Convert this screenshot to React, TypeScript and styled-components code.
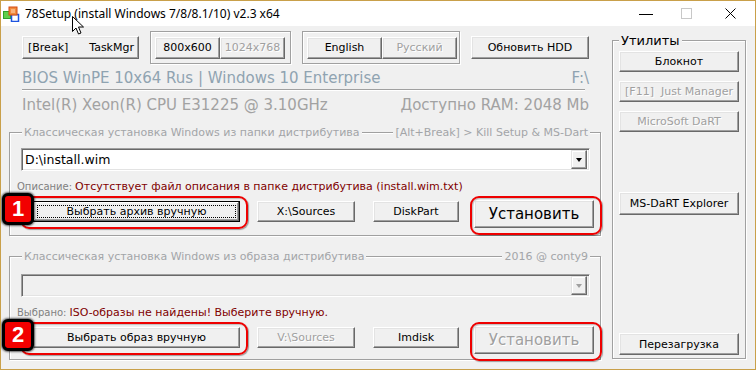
import React from 'react';
import styled, { createGlobalStyle, css } from 'styled-components';

const UI = '"DejaVu Sans", "Noto Sans", sans-serif';

const GlobalStyle = createGlobalStyle`
  html, body { margin: 0; padding: 0; background: #ffffff; }
  body { font-family: ${UI}; }
  * { box-sizing: border-box; }
`;

const Window = styled.div`
  position: relative;
  width: 756px;
  height: 370px;
  border: 1px solid #c9a04a;
  background: #f0f0f0;
  display: flex;
  flex-direction: column;
  overflow: hidden;
`;

const TitleBar = styled.div`
  height: 25px;
  flex-shrink: 0;
  background: #ffffff;
  display: flex;
  align-items: center;
`;

const AppIcon = styled.svg`
  width: 17px;
  height: 16px;
  margin-left: 2px;
  margin-top: 1px;
  flex-shrink: 0;
`;

const TitleText = styled.span`
  margin-left: 5px;
  font-family: "Noto Sans", "Open Sans", sans-serif;
  font-size: 12px;
  color: #000;
  white-space: nowrap;
  flex: 1;
`;

const CaptionButton = styled.div<{ $w: number }>`
  width: ${(p) => p.$w}px;
  height: 25px;
  display: flex;
  align-items: center;
  justify-content: center;
`;

const Cursor = styled.svg`
  position: absolute;
  left: 71px;
  top: 15px;
  width: 13px;
  height: 20px;
`;

const Body = styled.div`
  flex: 1;
  display: flex;
  flex-direction: row;
`;

const LeftColumn = styled.div`
  width: 600px;
  padding-left: 8px;
  display: flex;
  flex-direction: column;
`;

const TopRow = styled.div`
  height: 38px;
  padding: 5px 0 0 13px;
  display: flex;
  align-items: center;
`;

const Button = styled.div<{
  $w: number;
  $h?: number;
  $size?: number;
  $disabled?: boolean;
  $focused?: boolean;
  $mt?: number;
  $ml?: number;
  $spread?: boolean;
}>`
  position: relative;
  width: ${(p) => p.$w}px;
  height: ${(p) => p.$h ?? 21}px;
  margin-top: ${(p) => p.$mt ?? 0}px;
  margin-left: ${(p) => p.$ml ?? 0}px;
  flex-shrink: 0;
  background: #f0f0f0;
  border: 1px solid;
  border-color: #ffffff #696969 #696969 #ffffff;
  box-shadow: inset -1px -1px 0 #a0a0a0, inset 1px 1px 0 #e3e3e3;
  display: flex;
  align-items: center;
  justify-content: ${(p) => (p.$spread ? 'space-between' : 'center')};
  padding: ${(p) => (p.$spread ? '0 4px 0 5px' : '0')};
  font-family: ${UI};
  font-size: ${(p) => p.$size ?? 11}px;
  color: ${(p) => (p.$disabled ? '#a0a0a0' : '#000000')};
  white-space: nowrap;
  ${(p) =>
    p.$disabled &&
    css`
      text-shadow: 1px 1px 0 #ffffff;
    `}
  ${(p) =>
    p.$focused &&
    css`
      border-color: #000000;
      box-shadow: inset -1px -1px 0 #696969, inset 1px 1px 0 #ffffff, inset -2px -2px 0 #a0a0a0;
      &::after {
        content: '';
        position: absolute;
        inset: 3px;
        border: 1px dotted #000000;
      }
    `}
`;

const MiniGroup = styled.div<{ $w: number; $ml: number }>`
  width: ${(p) => p.$w}px;
  height: 33px;
  margin-left: ${(p) => p.$ml}px;
  border: 1px solid #a0a0a0;
  box-shadow: inset 1px 1px 0 #ffffff, 1px 1px 0 #ffffff;
  display: flex;
  align-items: center;
  padding-left: 4px;
  flex-shrink: 0;
`;

const Info = styled.div`
  padding: 0 12px 0 13px;
  display: flex;
  flex-direction: column;
`;

const InfoLine = styled.div<{ $color: string }>`
  height: 25px;
  padding-top: 2px;
  display: flex;
  justify-content: space-between;
  align-items: center;
  font-family: ${UI};
  font-size: 15px;
  color: ${(p) => p.$color};
  white-space: nowrap;
`;

const Separator = styled.div`
  height: 2px;
  margin-right: 4px;
  border-top: 1px solid #a0a0a0;
  border-bottom: 1px solid #ffffff;
`;

const GroupBox = styled.div<{ $mt: number; $h: number }>`
  position: relative;
  margin-top: ${(p) => p.$mt}px;
  height: ${(p) => p.$h}px;
  border: 1px solid #a0a0a0;
  box-shadow: inset 1px 1px 0 #ffffff, 1px 1px 0 #ffffff;
  display: flex;
  flex-direction: column;
`;

const GroupHeader = styled.div<{ $pl: number; $pr: number }>`
  height: 15px;
  margin-top: -8px;
  padding: 0 ${(p) => p.$pr}px 0 ${(p) => p.$pl}px;
  display: flex;
  justify-content: space-between;
  align-items: center;
`;

const GroupTitle = styled.span<{ $dark?: boolean; $size?: number }>`
  background: #f0f0f0;
  padding: 0 2px;
  font-family: ${UI};
  font-size: ${(p) => p.$size ?? 11}px;
  color: ${(p) => (p.$dark ? '#000000' : '#a3a5a8')};
  white-space: nowrap;
  line-height: 15px;
`;

const Combo = styled.div<{ $disabled?: boolean; $mt: number }>`
  height: 23px;
  margin: ${(p) => p.$mt}px 10px 0 11px;
  background: ${(p) => (p.$disabled ? '#f0f0f0' : '#ffffff')};
  border: 1px solid;
  border-color: #a0a0a0 #ffffff #ffffff #a0a0a0;
  box-shadow: inset 1px 1px 0 #696969, inset -1px -1px 0 #e3e3e3;
  display: flex;
  align-items: center;
  padding: 0 2px 0 3px;
`;

const ComboText = styled.span`
  flex: 1;
  font-family: ${UI};
  font-size: 12.5px;
  color: #000;
`;

const ArrowButton = styled.div`
  width: 16px;
  height: 19px;
  background: #f0f0f0;
  border: 1px solid;
  border-color: #e3e3e3 #696969 #696969 #e3e3e3;
  box-shadow: inset -1px -1px 0 #a0a0a0, inset 1px 1px 0 #ffffff;
  display: flex;
  align-items: center;
  justify-content: center;
`;

const Triangle = styled.div<{ $disabled?: boolean }>`
  width: 0;
  height: 0;
  border-left: 3.5px solid transparent;
  border-right: 3.5px solid transparent;
  border-top: 4px solid ${(p) => (p.$disabled ? '#a0a0a0' : '#000000')};
  margin-top: 1px;
`;

const Desc = styled.div`
  height: 16px;
  margin-top: 7px;
  padding-left: 7px;
  display: flex;
  align-items: center;
  white-space: nowrap;
`;

const DescLabel = styled.span`
  font-family: ${UI};
  font-size: 10px;
  color: #808080;
`;

const DescText = styled.span`
  margin-left: 3px;
  font-family: ${UI};
  font-size: 11px;
  color: #800000;
`;

const ButtonRow = styled.div`
  margin-top: 6px;
  padding-left: 23px;
  display: flex;
  align-items: flex-start;
`;

const Annotated = styled.div`
  position: relative;
  flex-shrink: 0;
`;

const Ring = styled.div<{ $l: number; $t: number; $w: number; $h: number }>`
  position: absolute;
  left: ${(p) => p.$l}px;
  top: ${(p) => p.$t}px;
  width: ${(p) => p.$w}px;
  height: ${(p) => p.$h}px;
  border: 2px solid #ee0000;
  border-radius: 9px;
  box-shadow: 1px 1px 1px rgba(0, 0, 0, 0.35), inset 1px 1px 1px rgba(0, 0, 0, 0.2);
  pointer-events: none;
`;

const Badge = styled.div`
  position: absolute;
  left: -31px;
  top: -7px;
  width: 32px;
  height: 32px;
  background: #f20000;
  border: 3px solid #000000;
  border-radius: 6px;
  box-shadow: 0 0 2px 1px rgba(0, 0, 0, 0.6);
  display: flex;
  align-items: center;
  justify-content: center;
  font-family: "Liberation Sans", Arial, sans-serif;
  font-weight: bold;
  font-size: 22px;
  color: #ffffff;
`;

const RightColumn = styled.div`
  margin-left: 11px;
  width: 134px;
  display: flex;
  flex-direction: column;
`;

const UtilButtons = styled.div`
  flex: 1;
  padding: 3px 6px 3px 6px;
  display: flex;
  flex-direction: column;
`;

const Spacer = styled.div`
  flex: 1;
`;

const App: React.FC = () => {
  return (
    <>
      <GlobalStyle />
      <Window>
        <TitleBar>
          <AppIcon viewBox="0 0 17 16">
            <rect x="0.5" y="5.5" width="7" height="7" fill="#5fcf4a" stroke="#2ea02a" />
            <rect x="8.5" y="8.5" width="7" height="7" fill="#ffffff" stroke="#1e54e0" strokeWidth="1.5" />
            <rect x="6" y="1" width="8" height="8" fill="#f08a3c" stroke="#d44a10" />
            <rect x="8" y="3" width="4" height="4" fill="#f9b27a" />
          </AppIcon>
          <TitleText>78Setup (install Windows 7/8/8.1/10) v2.3 x64</TitleText>
          <CaptionButton $w={40}>
            <svg width="14" height="10" viewBox="0 0 14 10">
              <line x1="0" y1="5.5" x2="14" y2="5.5" stroke="#000" strokeWidth="1" />
            </svg>
          </CaptionButton>
          <CaptionButton $w={40}>
            <svg width="11" height="11" viewBox="0 0 11 11">
              <rect x="0.5" y="0.5" width="10" height="10" fill="none" stroke="#c8c8c8" strokeWidth="1" />
            </svg>
          </CaptionButton>
          <CaptionButton $w={49}>
            <svg width="11" height="11" viewBox="0 0 11 11">
              <path d="M0.5 0.5 L10.5 10.5 M10.5 0.5 L0.5 10.5" stroke="#000" strokeWidth="1" />
            </svg>
          </CaptionButton>
        </TitleBar>
        <Body>
          <LeftColumn>
            <TopRow>
              <Button $w={117} $h={23} $spread>
                <span>[Break]</span>
                <span>TaskMgr</span>
              </Button>
              <MiniGroup $w={141} $ml={11}>
                <Button $w={65} $h={22}>800x600</Button>
                <Button $w={65} $h={22} $disabled>
                  1024x768
                </Button>
              </MiniGroup>
              <MiniGroup $w={158} $ml={11}>
                <Button $w={75} $h={22}>English</Button>
                <Button $w={75} $h={22} $disabled>
                  Русский
                </Button>
              </MiniGroup>
              <Button $w={118} $h={23} $ml={11}>
                Обновить HDD
              </Button>
            </TopRow>
            <Info>
              <InfoLine $color="#8fa3b1">
                <span>BIOS WinPE 10x64 Rus | Windows 10 Enterprise</span>
                <span>F:\</span>
              </InfoLine>
              <Separator />
              <InfoLine $color="#a2a2a2">
                <span>Intel(R) Xeon(R) CPU E31225 @ 3.10GHz</span>
                <span>Доступно RAM: 2048 Mb</span>
              </InfoLine>
            </Info>
            <GroupBox $mt={16} $h={104}>
              <GroupHeader $pl={12} $pr={10}>
                <GroupTitle>Классическая установка Windows из папки дистрибутива</GroupTitle>
                <GroupTitle>[Alt+Break] &gt; Kill Setup &amp; MS-Dart</GroupTitle>
              </GroupHeader>
              <Combo $mt={8}>
                <ComboText>D:\install.wim</ComboText>
                <ArrowButton>
                  <Triangle />
                </ArrowButton>
              </Combo>
              <Desc>
                <DescLabel>Описание:</DescLabel>
                <DescText>Отсутствует файл описания в папке дистрибутива (install.wim.txt)</DescText>
              </Desc>
              <ButtonRow>
                <Annotated>
                  <Button $w={207} $mt={1} $focused>
                    Выбрать архив вручную
                  </Button>
                  <Ring $l={-13} $t={-4} $w={228} $h={33} />
                  <Badge>1</Badge>
                </Annotated>
                <Button $w={98} $mt={1} $ml={17}>
                  X:\Sources
                </Button>
                <Button $w={86} $mt={1} $ml={18}>
                  DiskPart
                </Button>
                <Annotated>
                  <Button $w={120} $h={28} $ml={15} $size={15}>
                    Установить
                  </Button>
                  <Ring $l={11} $t={-4} $w={132} $h={39} />
                </Annotated>
              </ButtonRow>
            </GroupBox>
            <GroupBox $mt={20} $h={104}>
              <GroupHeader $pl={12} $pr={10}>
                <GroupTitle>Классическая установка Windows из образа дистрибутива</GroupTitle>
                <GroupTitle>2016 @ conty9</GroupTitle>
              </GroupHeader>
              <Combo $mt={10} $disabled>
                <ComboText />
                <ArrowButton>
                  <Triangle $disabled />
                </ArrowButton>
              </Combo>
              <Desc>
                <DescLabel>Выбрано:</DescLabel>
                <DescText>ISO-образы не найдены! Выберите вручную.</DescText>
              </Desc>
              <ButtonRow>
                <Annotated>
                  <Button $w={207} $mt={1}>
                    Выбрать образ вручную
                  </Button>
                  <Ring $l={-13} $t={-4} $w={228} $h={33} />
                  <Badge>2</Badge>
                </Annotated>
                <Button $w={98} $mt={1} $ml={17} $disabled>
                  V:\Sources
                </Button>
                <Button $w={86} $mt={1} $ml={18}>
                  Imdisk
                </Button>
                <Annotated>
                  <Button $w={120} $h={28} $ml={15} $size={15} $disabled>
                    Установить
                  </Button>
                  <Ring $l={11} $t={-4} $w={132} $h={39} />
                </Annotated>
              </ButtonRow>
            </GroupBox>
          </LeftColumn>
          <RightColumn>
            <GroupBox $mt={14} $h={319}>
              <GroupHeader $pl={6} $pr={6}>
                <GroupTitle $dark $size={13}>
                  Утилиты
                </GroupTitle>
              </GroupHeader>
              <UtilButtons>
                <Button $w={120}>Блокнот</Button>
                <Button $w={120} $mt={9} $disabled>
                  [F11]&nbsp; Just Manager
                </Button>
                <Button $w={120} $mt={9} $disabled>
                  MicroSoft DaRT
                </Button>
                <Button $w={120} $h={23} $mt={60}>
                  MS-DaRT Explorer
                </Button>
                <Spacer />
                <Button $w={120} $h={22}>
                  Перезагрузка
                </Button>
              </UtilButtons>
            </GroupBox>
          </RightColumn>
        </Body>
        <Cursor viewBox="0 0 13 20">
          <path
            d="M0.5 0.5 L0.5 15.5 L4 12 L6.5 18 L9 17 L6.5 11 L11.5 11 Z"
            fill="#ffffff"
            stroke="#000000"
            strokeWidth="1"
            strokeLinejoin="round"
          />
        </Cursor>
      </Window>
    </>
  );
};

export default App;
